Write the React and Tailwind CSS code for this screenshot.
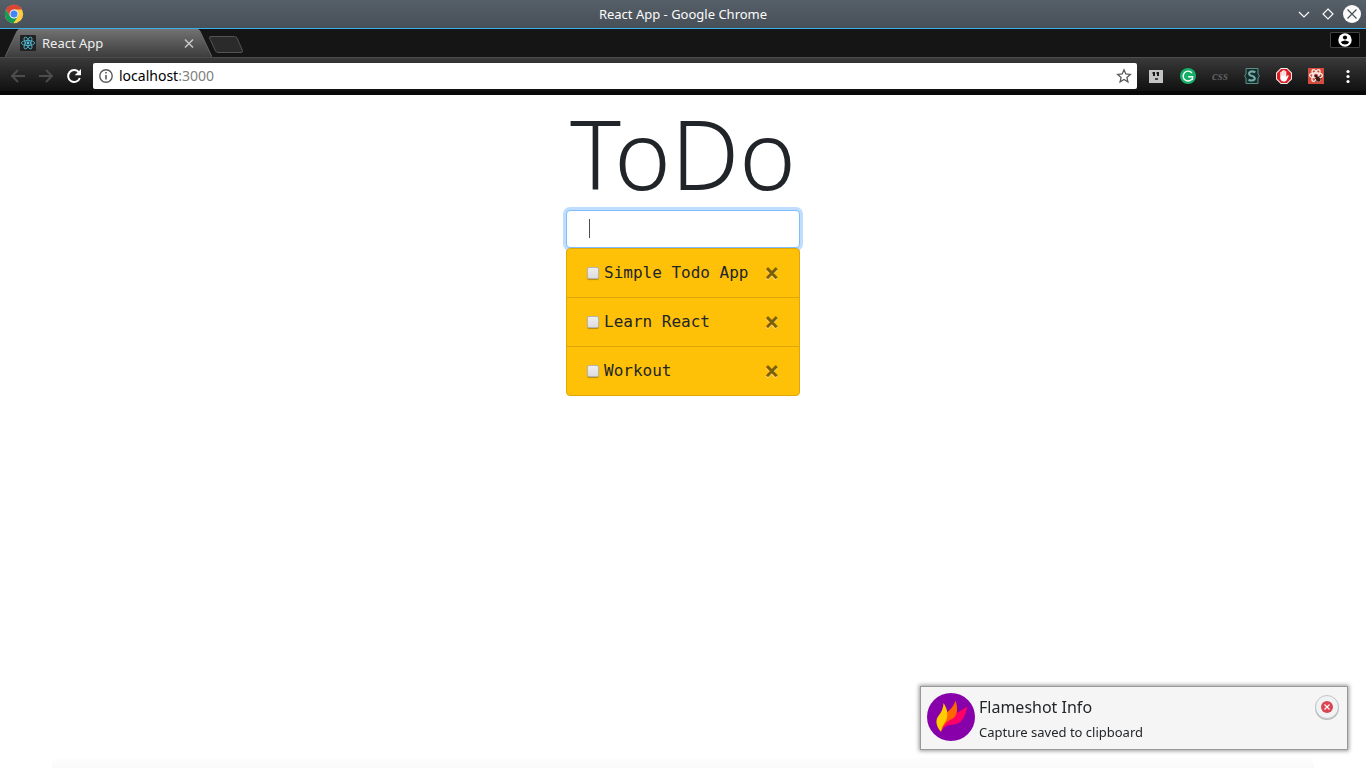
import React, { useState } from "react";

function ChromeLogo() {
  return (
    <svg viewBox="0 0 48 48" className="size-5 shrink-0" aria-hidden="true">
      <circle cx="24" cy="24" r="22" fill="#ffcd40" />
      <path d="M4.9 13A22 22 0 0 0 22.500 46L33.700 29.600 24 35 14.300 29.600z" fill="#0f9d58" />
      <path d="M4.900 13A22 22 0 0 1 43.100 13H24L14.300 29.600z" fill="#db4437" />
      <circle cx="24" cy="24" r="10.800" fill="#f1f1f1" />
      <circle cx="24" cy="24" r="8.400" fill="#4285f4" />
    </svg>
  );
}

function ReactIcon() {
  return (
    <svg viewBox="0 0 16 16" className="size-4 shrink-0" aria-hidden="true">
      <rect width="16" height="16" rx="1" fill="#222" />
      <g fill="none" stroke="#53c1de" strokeWidth="0.8">
        <ellipse cx="8" cy="8" rx="6.6" ry="2.5" />
        <ellipse cx="8" cy="8" rx="6.6" ry="2.5" transform="rotate(60 8 8)" />
        <ellipse cx="8" cy="8" rx="6.6" ry="2.5" transform="rotate(120 8 8)" />
      </g>
      <circle cx="8" cy="8" r="1.4" fill="#53c1de" />
    </svg>
  );
}

function TitleBar() {
  return (
    <header className="grid h-[29px] grid-cols-[1fr_auto_1fr] items-center border-b border-[#3daee9] bg-linear-to-b from-[#566069] to-[#474f57] px-1">
      <ChromeLogo />
      <div className="text-[13px] leading-5 text-[#fcfcfc]">React App - Google Chrome</div>
      <div className="flex items-center justify-end gap-[5px]">
        <button type="button" aria-label="Minimize">
          <svg viewBox="0 0 20 20" className="size-5" fill="none" stroke="#fcfcfc" strokeWidth="1.2">
            <path d="M5 8l5 5 5-5" />
          </svg>
        </button>
        <button type="button" aria-label="Maximize">
          <svg viewBox="0 0 18 20" className="h-5 w-[18px]" fill="none" stroke="#fcfcfc" strokeWidth="1.2">
            <path d="M9 5l5 5-5 5-5-5z" />
          </svg>
        </button>
        <button type="button" aria-label="Close window">
          <svg viewBox="0 0 20 20" className="size-5" fill="none">
            <circle cx="10" cy="10" r="9" fill="#fcfcfc" />
            <path d="M5.5 5.5l9 9M14.500 5.500l-9 9" stroke="#475057" strokeWidth="1.2" />
          </svg>
        </button>
      </div>
    </header>
  );
}

function TabStrip() {
  return (
    <div className="flex h-7 justify-between bg-[#151515] pr-1.5 pl-[5px]">
      <div className="flex">
        <div className="relative flex w-[207px] items-center pr-[17px] pl-[15px]">
          <svg viewBox="0 0 207 28" className="absolute inset-0 h-7 w-[207px]" preserveAspectRatio="none" aria-hidden="true">
            <defs>
              <linearGradient id="tab" x1="0" y1="0" x2="0" y2="1">
                <stop offset="0" stopColor="#727272" />
                <stop offset="1" stopColor="#3d3d3d" />
              </linearGradient>
            </defs>
            <path d="M0 28 12 2Q13 0 15 0H192Q194 0 195 2L207 28z" fill="url(#tab)" />
            <path d="M0 28 12 2Q13 .5 15 .5H192Q194 .5 195 2L207 28" fill="none" stroke="#777" strokeWidth="0.7" />
          </svg>
          <div className="relative flex w-full items-center">
            <ReactIcon />
            <span className="ml-1.5 flex-1 text-[13px] leading-5 text-[#eee]">React App</span>
            <button type="button" aria-label="Close tab">
              <svg viewBox="0 0 12 12" className="size-3" stroke="#c6c6c6" strokeWidth="1.6">
                <path d="M2 2.500l8 8M10 2.500l-8 8" />
              </svg>
            </button>
          </div>
        </div>
        <button type="button" aria-label="New tab" className="-ml-1 mt-1.5 self-start">
          <svg viewBox="0 0 36 18" className="h-[18px] w-9">
            <path d="M3 1.500H26.500Q28 1.500 29 3L34.500 15.500Q35 17.500 33 17.500H10Q8.500 17.500 7.500 16L1.500 3Q1 1.500 3 1.500z" fill="#2b2b2b" stroke="#545454" />
          </svg>
        </button>
      </div>
      <button type="button" aria-label="Profile" className="mt-[3px] flex h-4 w-[30px] items-center justify-center rounded-[1px] border border-[#424242] bg-black">
        <svg viewBox="0 0 14 14" className="size-3.5">
          <circle cx="7" cy="7" r="6.700" fill="#fff" />
          <circle cx="7" cy="4.500" r="2.100" fill="#000" />
          <path d="M2.700 9Q7 6 11.300 9Q9.800 11.500 7 11.500Q4.200 11.500 2.700 9z" fill="#000" />
        </svg>
      </button>
    </div>
  );
}

function Arrow({ label, d }) {
  return (
    <button type="button" aria-label={label}>
      <svg viewBox="0 0 16 16" className="size-4" fill="none" stroke="#4d4d4d" strokeWidth="1.9">
        <path d={d} />
      </svg>
    </button>
  );
}

function Extensions() {
  return (
    <div className="flex items-center gap-4">
      <button type="button" aria-label="Faces extension">
        <svg viewBox="0 0 16 16" className="size-4">
          <path d="M1 2H15V15H1z" fill="#c4c4c4" />
          <path d="M5 4h2v4H5zM9 4h2v4H9z" fill="#181818" />
          <path d="M4 4h1v2H4zM8 4h1v2H8z" fill="#777" />
          <path d="M7 10h3v2H7z" fill="#444" />
        </svg>
      </button>
      <button type="button" aria-label="Grammar extension">
        <svg viewBox="0 0 16 16" className="size-4" fill="none">
          <circle cx="8" cy="8" r="8" fill="#15b067" />
          <path d="M11.900 5A4.900 4.900 0 1 0 12 11M8.200 8.700H12.500V12" stroke="#fff" strokeWidth="1.4" />
        </svg>
      </button>
      <button type="button" aria-label="CSS extension" className="flex w-4 justify-center font-[Liberation_Serif,serif] text-[13px] leading-4 font-bold text-[#5c5c5c] italic">
        css
      </button>
      <button type="button" aria-label="Stylish extension">
        <svg viewBox="0 0 16 16" className="size-4">
          <path d="M2 .5H14V6L15.500 8 14 10V15.500H2V10L.5 8 2 6z" fill="#122f2e" stroke="#5e8e8b" />
          <path d="M11.300 4.300Q8.500 2.800 6.300 3.700C4.300 4.700 4.800 7.200 7.500 7.800C11.200 8.600 11.500 10.900 9.700 12Q7.300 13.100 4.500 11.700" fill="none" stroke="#78aaa7" strokeWidth="2.200" />
        </svg>
      </button>
      <button type="button" aria-label="Ad blocker">
        <svg viewBox="0 0 16 16" className="size-4">
          <path d="M4.800 0h6.400L16 4.800v6.400L11.200 16H4.800L0 11.200V4.800z" fill="#eee" />
          <path d="M5.200 1h5.600L15 5.200v5.600L10.800 15H5.200L1 10.800V5.200z" fill="#df1c23" />
          <path d="M4.300 8V4.300q.8-.8 1.400 0V3q.8-.8 1.500 0V2.300q.8-.8 1.600 0V3.500q.8-.8 1.500 0V9l1-1.500q1-.8 1.500.2L10.700 12Q10 13.700 8 13.700Q5 13.500 4.300 11z" fill="#fff" />
          <path d="M5.700 4v4M7.200 3v4.500M8.800 3.300v4.200" stroke="#e77" strokeWidth=".4" />
        </svg>
      </button>
      <button type="button" aria-label="React developer tools">
        <svg viewBox="0 0 16 16" className="size-4">
          <path d="M0 0h16v16H0z" fill="#d64b3c" />
          <g fill="none" stroke="#f4e8e5" strokeWidth="1.300">
            <ellipse cx="8" cy="7.500" rx="6.500" ry="2.500" />
            <ellipse cx="8" cy="7.500" rx="6.500" ry="2.500" transform="rotate(60 8 7.500)" />
            <ellipse cx="8" cy="7.500" rx="6.500" ry="2.500" transform="rotate(120 8 7.500)" />
          </g>
          <ellipse cx="10" cy="11" rx="2" ry="2.900" transform="rotate(-35 10 11)" fill="#3a1613" />
          <circle cx="7.800" cy="8" r="1.300" fill="#3a1613" />
          <path d="M6.300 11l6.500-3M7.500 13.300l6-2.800" stroke="#3a1613" strokeWidth=".8" fill="none" />
        </svg>
      </button>
      <button type="button" aria-label="Menu">
        <svg viewBox="0 0 4 16" className="ml-[6px] h-4 w-1" fill="#fff">
          <circle cx="2" cy="3.500" r="1.600" />
          <circle cx="2" cy="8.500" r="1.600" />
          <circle cx="2" cy="13.500" r="1.600" />
        </svg>
      </button>
    </div>
  );
}

function Toolbar() {
  return (
    <div className="border-b-4 border-[#080808] bg-linear-to-b from-[#3b3b3b] to-[#111]">
      <div className="flex h-[34px] items-center border-t border-[#4c4c4c] pt-0.5 pr-4 pl-2.5">
        <nav className="flex items-center gap-3">
          <Arrow label="Back" d="M15 8H2M8 2 2 8l6 6" />
          <Arrow label="Forward" d="M1 8h13M8 2l6 6-6 6" />
          <button type="button" aria-label="Reload">
            <svg viewBox="0 0 16 16" className="size-4" fill="none">
              <path d="M13 4.500A6 6 0 1 0 13.800 10" stroke="#fff" strokeWidth="2" />
              <path d="M15 1V7.300H8.700z" fill="#fff" />
            </svg>
          </button>
        </nav>
        <div className="ml-[11px] flex h-[26px] flex-1 items-center rounded-[2px] bg-white pr-[5px] pl-1.5">
          <svg viewBox="0 0 14 14" className="size-3.5" fill="none" stroke="#5a5a5a" aria-hidden="true">
            <circle cx="7" cy="7" r="6.200" strokeWidth="1.400" />
            <path d="M7 6v4.500M7 3v1.600" strokeWidth="1.600" />
          </svg>
          <div className="ml-1.5 flex-1 text-sm leading-5 text-black">
            localhost<span className="text-[#808080]">:3000</span>
          </div>
          <button type="button" aria-label="Bookmark">
            <svg viewBox="0 0 16 16" className="size-4" fill="none" stroke="#5a5a5a" strokeWidth="1.300">
              <path d="M8 1.800l1.800 4.200 4.500.4-3.400 3 1 4.400L8 11.500l-3.900 2.300 1-4.400-3.400-3 4.500-.4z" />
            </svg>
          </button>
        </div>
        <div className="ml-[11px]">
          <Extensions />
        </div>
      </div>
    </div>
  );
}

function TodoItem({ id, title, onRemove }) {
  return (
    <li className="flex items-center border-b border-[#dda70a] px-5 py-3 last:border-b-0">
      <input
        id={id}
        type="checkbox"
        className="size-3 shrink-0 appearance-none rounded-[2px] border border-[#b5b5b5] bg-linear-to-b from-[#eee] to-[#ddd] shadow-[0_1px_1px_#b58a10] checked:bg-[#777]"
      />
      <label htmlFor={id} className="ml-[5px] flex-1 whitespace-nowrap">{title}</label>
      <button
        type="button"
        aria-label={`Remove ${title}`}
        onClick={onRemove}
        className="text-2xl leading-6 font-bold text-black opacity-50 [text-shadow:0_1px_0_#fff]"
      >
        ×
      </button>
    </li>
  );
}

function Notification() {
  return (
    <aside className="fixed right-[18px] bottom-[18px] flex h-16 w-[428px] items-start border border-[#999] bg-[#f5f5f5] px-1.5 pt-1.5 shadow-[0_0_4px_1px_#999]">
      <svg viewBox="0 0 48 48" className="size-12 shrink-0" aria-hidden="true">
        <circle cx="24" cy="24" r="24" fill="#8700aa" />
        <path d="M14 38.500C17 29 21 24 28 20.500Q34 18 40.300 13.500C38.500 23 35 31.500 25 31.800C19 32 16.500 35 14 38.500z" fill="#ff0066" />
        <path d="M14 38.500C14.500 29 16 23 21 18.500Q26.500 14 28.500 7.500C31 15 31 23 25 26C19 28.500 16 33 14 38.500z" fill="#ff6600" />
        <path d="M14 38.800C9.500 34 8 28 11 23.500Q16.500 17 16.500 10C21.500 17 21.500 25 17.500 30Q14.500 34 14 38.800z" fill="#ffcc00" />
      </svg>
      <div className="ml-1 flex-1 text-[#232629]">
        <h2 className="mt-0.5 text-base leading-6">Flameshot Info</h2>
        <p className="mt-[3px] text-[13px] leading-5">Capture saved to clipboard</p>
      </div>
      <button type="button" aria-label="Dismiss" className="mt-0.5 mr-0.5 flex size-6 items-center justify-center rounded-full border border-[#c2c5c8] bg-[#f1f2f3] shadow-[0_1px_0_#bbb]">
        <svg viewBox="0 0 12 12" className="size-3">
          <circle cx="6" cy="6" r="6" fill="#da4453" />
          <path d="M3.500 3.500l5 5M8.500 3.500l-5 5" stroke="#fff" strokeWidth="1.100" />
        </svg>
      </button>
    </aside>
  );
}

export default function App() {
  const [todos, setTodos] = useState(["Simple Todo App", "Learn React", "Workout"]);
  const [draft, setDraft] = useState("");

  const submit = (event) => {
    event.preventDefault();
    if (!draft.trim()) return;
    setTodos([...todos, draft.trim()]);
    setDraft("");
  };

  return (
    <div className="flex min-h-screen flex-col bg-white font-[Noto_Sans,sans-serif]">
      <TitleBar />
      <TabStrip />
      <Toolbar />
      <main className="flex flex-1 flex-col items-center text-[#212529]">
        <h1 className="text-8xl leading-[115px] font-light">ToDo</h1>
        <div className="w-[234px] font-[DejaVu_Sans_Mono,monospace] text-base">
          <form onSubmit={submit} className="relative">
            <input
              type="text"
              aria-label="New todo"
              value={draft}
              onChange={(event) => setDraft(event.target.value)}
              className="block h-[38px] w-full rounded-sm border border-[#80bdff] bg-white px-[22px] py-1.5 caret-transparent shadow-[0_0_0_3px_#bfdeff] outline-none"
            />
            {!draft && <span className="absolute top-[9px] left-[23px] h-[19px] w-px bg-[#495057]" />}
          </form>
          <ul className="relative rounded-sm border border-[#dda70a] bg-[#ffc107]">
            {todos.map((title, index) => (
              <TodoItem
                key={title}
                id={`todo-${index}`}
                title={title}
                onRemove={() => setTodos(todos.filter((todo) => todo !== title))}
              />
            ))}
          </ul>
        </div>
      </main>
      <div className="mx-[52px] -mt-2.5 h-2.5 rounded-t-lg bg-linear-to-b from-[#fdfdfd] to-[#fafafa]" />
      <Notification />
    </div>
  );
}
